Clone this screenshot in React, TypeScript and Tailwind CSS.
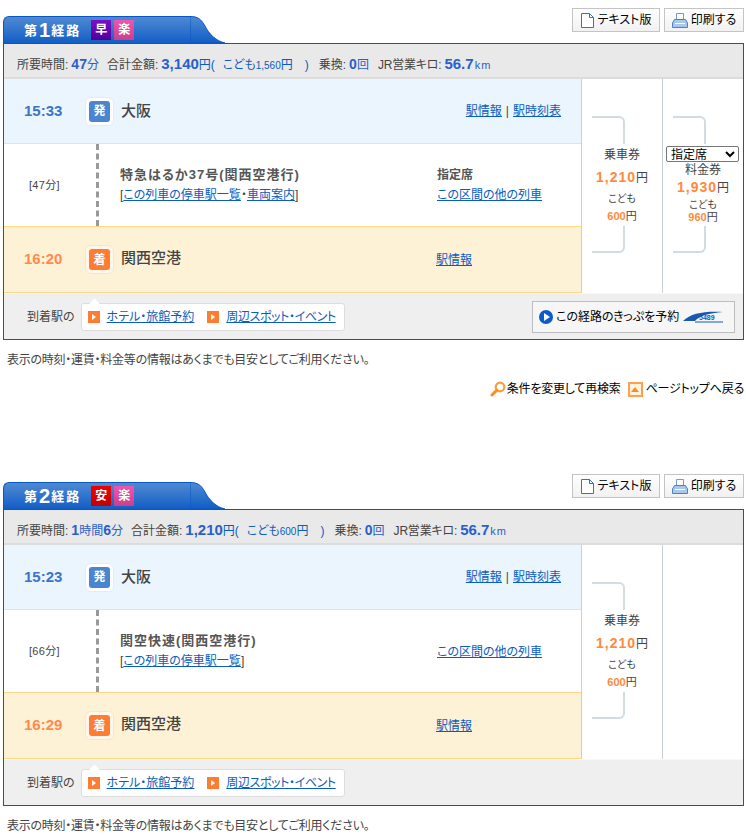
import type { ReactNode } from "react";

const linkClass = "text-[#0b5cc0] underline";

interface Leg {
    no: number;
    badge: string;
    badgeClass: string;
    time: ReactNode;
    fare: string;
    child: string;
    depart: string;
    arrive: string;
    minutes: string;
    train: string;
    trainLinks: string[];
    seat?: boolean;
}

function Bracket({ bottom }: { bottom?: boolean }) {
    return (
        <div
            className={
                bottom
                    ? "h-[27px] w-[33px] ml-[10px] border-b-2 border-r-2 border-[#d2dbdf] rounded-br-[6px]"
                    : "h-[28px] w-[33px] ml-[10px] border-t-2 border-r-2 border-[#d2dbdf] rounded-tr-[6px]"
            }
        />
    );
}

function Price({ label, adult, child, select }: { label: string; adult: string; child: string; select?: boolean }) {
    return (
        <div className="w-[81px] shrink-0 border-l border-[#c6d0d6] flex flex-col justify-center bg-white pb-[3px]">
            <Bracket />
            {select ? (
                <select className="mt-[2px] ml-[3px] w-[73px] h-[16px] border border-[#767676] rounded-[2px] bg-white text-[12px] leading-[14px] text-black">
                    <option>指定席</option>
                </select>
            ) : null}
            <div className={`text-center text-[12px] leading-[14px] text-[#444] ${select ? "mt-[1px]" : "mt-[4px]"}`}>{label}</div>
            <div className={`text-center text-[12px] text-[#444] ${select ? "mt-[1px]" : "mt-[6px]"} leading-[18px]`}>
                <span className="text-[14px] font-bold text-[#ff8a3c] tracking-[1px]">{adult}</span>円
            </div>
            <div className={`text-center text-[10px] leading-[14px] text-[#444] ${select ? "mt-[1px]" : "mt-[5px]"}`}>こども</div>
            <div className={`text-center text-[11px] text-[#444] leading-[14px] ${select ? "-mt-[2px]" : "mt-[3px]"}`}>
                <span className="font-bold text-[#ff8a3c]">{child}</span>円
            </div>
            <div className={select ? "mt-[2px]" : "mt-[3px]"}>
                <Bracket bottom />
            </div>
        </div>
    );
}

function StationIcon({ label, className, ring }: { label: string; className: string; ring: string }) {
    return (
        <div className={`w-[29px] h-[29px] rounded-[6px] border flex items-center justify-center ${ring}`}>
            <div className={`w-[21px] h-[21px] rounded-[3px] text-white text-[12px] font-bold flex items-center justify-center ${className}`}>
                {label}
            </div>
        </div>
    );
}

function OrangeArrow() {
    return (
        <span className="w-[12px] h-[12px] bg-[#ff7d33] flex items-center justify-center">
            <span className="border-l-[4px] border-l-white border-y-[3px] border-y-transparent" />
        </span>
    );
}

function DocIcon() {
    return (
        <svg width="13" height="15" viewBox="0 0 13 15" fill="none">
            <path d="M.5 .5 H8.5 L12.5 4.5 V14.5 H.5 Z" fill="#fff" stroke="#2f74cf" />
            <path d="M8.5 .5 V4.5 H12.5" stroke="#2f74cf" />
        </svg>
    );
}

function PrinterIcon() {
    return (
        <svg width="16" height="15" viewBox="0 0 16 15">
            <path d="M4.5 .5 H11.5 V7 H4.5 Z" fill="#fff" stroke="#6f9bd4" />
            <path d="M2.5 6.5 H13.5 L15.5 10 V14.5 H.5 V10 Z" fill="#a9c7ea" stroke="#4a82c8" />
            <path d="M3 10.5 H13" stroke="#fff" />
        </svg>
    );
}

function SearchIcon() {
    return (
        <svg width="16" height="16" viewBox="0 0 16 16" fill="none">
            <circle cx="10" cy="6" r="4.3" stroke="#ff9a3a" strokeWidth="2.2" />
            <path d="M6.5 9.5 L2 14" stroke="#ff8a20" strokeWidth="3" strokeLinecap="round" />
        </svg>
    );
}

function RouteCard({ leg }: { leg: Leg }) {
    return (
        <div>
            {/* tab + buttons */}
            <div className="h-[35px] flex justify-between">
                <div className="flex self-end pl-[3px] h-[27px]">
                    <div className="w-[187px] h-[27px] rounded-tl-[6px] border-l border-t border-[#0b56c5] bg-gradient-to-b from-[#4e8ad2] to-[#0f5dc6] flex items-center pl-[20px]">
                        <span className="text-white font-bold text-[13px] tracking-[2px] leading-none flex items-center">
                            第<span className="text-[20px] leading-none tracking-[1px]">{leg.no}</span>経路
                        </span>
                        <span className={`ml-[10px] w-[20px] h-[20px] text-[12px] font-bold text-white flex items-center justify-center ${leg.badgeClass}`}>
                            {leg.badge}
                        </span>
                        <span className="ml-[3px] w-[20px] h-[20px] text-[12px] font-bold text-white flex items-center justify-center bg-gradient-to-b from-[#ee55b0] to-[#cc3f8d]">
                            楽
                        </span>
                    </div>
                    <svg width="35" height="27" viewBox="0 0 35 27">
                        <defs>
                            <linearGradient id={`tab${leg.no}`} x1="0" y1="0" x2="0" y2="1">
                                <stop offset="0" stopColor="#4e8ad2" />
                                <stop offset="1" stopColor="#0f5dc6" />
                            </linearGradient>
                        </defs>
                        <path d="M0 .5 C8 .5 11 3 15 10 C19 18 26 25 35 27 L0 27 Z" fill={`url(#tab${leg.no})`} stroke="#0b56c5" strokeWidth="1" />
                    </svg>
                </div>
                <div className="flex gap-[4px] h-[24px] pr-[2px] text-[12px] text-black">
                    <button className="w-[88px] border border-[#c4c4c4] bg-gradient-to-b from-white to-[#f1f1f1] flex items-center justify-center gap-[4px]">
                        <DocIcon />
                        テキスト版
                    </button>
                    <button className="w-[80px] border border-[#c4c4c4] bg-gradient-to-b from-white to-[#f1f1f1] flex items-center justify-center gap-[3px]">
                        <PrinterIcon />
                        印刷する
                    </button>
                </div>
            </div>

            <div className="ml-[3px] mr-[2px] border border-[#0b56c5] h-[297px] flex flex-col">
                {/* summary */}
                <div className="h-[35px] shrink-0 bg-[#e9e9e9] border-b-2 border-[#dcdcdc] flex items-center pt-[9px] pl-[13px] text-[12px] text-[#444] whitespace-nowrap">
                    <span>所要時間:</span>
                    <span className="ml-[3px] text-[#2a5fcb] -translate-y-[1px]">{leg.time}</span>
                    <span className="ml-[8px]">合計金額:</span>
                    <b className="ml-[3px] text-[15px] text-[#2a5fcb] -translate-y-[1px]">{leg.fare}</b>
                    <span className="text-[#0b5cc0]">円(</span>
                    <span className="ml-[8px] text-[#0b5cc0]">
                        こども<span className="text-[10px]">{leg.child}</span>円
                    </span>
                    <span className="ml-[12px] text-[#0b5cc0]">)</span>
                    <span className="ml-[10px]">乗換:</span>
                    <b className="ml-[3px] text-[14px] text-[#2a5fcb] -translate-y-[1px]">0</b>
                    <span className="text-[#2a5fcb]">回</span>
                    <span className="ml-[9px] tracking-[-0.2px]">JR営業キロ:</span>
                    <b className="ml-[3px] text-[15px] text-[#2a5fcb] -translate-y-[1px]">56.7</b>
                    <span className="ml-[1px] text-[11px] text-[#2a5fcb] tracking-[1px]">km</span>
                </div>

                {/* body */}
                <div className="h-[214px] shrink-0 flex">
                    <div className="w-[577px] shrink-0 flex flex-col">
                        <div className="h-[65px] bg-[#eaf5fe] border-b border-[#d3e6f5] flex items-center pl-[20px] pr-[20px]">
                            <div className="w-[61px] text-[15px] font-bold text-[#2a66c8] opacity-90">{leg.depart}</div>
                            <StationIcon label="発" className="bg-[#4a86d0]" ring="bg-white border-[#e3ebf8]" />
                            <div className="ml-[7px] text-[15px] font-medium text-[#444]">大阪</div>
                            <div className="ml-auto text-[12px] text-[#444]">
                                <a className={linkClass}>駅情報</a>
                                <span className="mx-[4px]">|</span>
                                <a className={linkClass}>駅時刻表</a>
                            </div>
                        </div>
                        <div className="h-[83px] flex border-b border-[#ffd987]">
                            <div className="w-[92px] flex items-center pl-[25px] text-[11px] tracking-[0.3px] text-[#444]">[{leg.minutes}]</div>
                            <div className="border-l-[3px] border-dashed border-[#999]" />
                            <div className="w-[338px] pl-[21px] flex flex-col justify-center">
                                <div className="text-[13px] font-bold tracking-[1px] text-[#555] leading-[18px] -translate-y-[1px]">{leg.train}</div>
                                <div className="mt-[2px] text-[12px] leading-[16px] text-[#444]">
                                    [
                                    {leg.trainLinks.map((t, i) => (
                                        <span key={t}>
                                            {i > 0 ? "・" : ""}
                                            <a className={linkClass}>{t}</a>
                                        </span>
                                    ))}
                                    ]
                                </div>
                            </div>
                            <div className="flex flex-col justify-center">
                                {leg.seat ? <div className="text-[12px] font-bold text-[#555] leading-[18px]">指定席</div> : null}
                                <a className={`${linkClass} text-[12px] leading-[18px] mt-[2px]`}>この区間の他の列車</a>
                            </div>
                        </div>
                        <div className="h-[66px] bg-[#fef2d6] flex items-center pl-[20px] border-b border-[#ffd987]">
                            <div className="w-[61px] text-[15px] font-bold text-[#ff8a4d]">{leg.arrive}</div>
                            <StationIcon label="着" className="bg-[#ff7d33]" ring="bg-[#fff8ea] border-[#fbe3cf]" />
                            <div className="ml-[7px] w-[315px] text-[15px] font-medium text-[#444] -translate-y-[1px]">関西空港</div>
                            <a className={`${linkClass} text-[12px]`}>駅情報</a>
                        </div>
                    </div>
                    <Price label="乗車券" adult="1,210" child="600" />
                    {leg.seat ? <Price label="料金券" adult="1,930" child="960" select /> : <div className="w-[81px] shrink-0 border-l border-[#c6d0d6]" />}
                </div>

                {/* footer */}
                <div className="flex-1 bg-[#efefef] border-t border-[#f8f8f8] flex items-center pl-[23px] pr-[8px] text-[12px] text-[#444]">
                    <span>到着駅の</span>
                    <div className="relative ml-[6px] h-[28px] w-[264px] bg-white border border-[#dddddd] rounded-[3px] flex items-center pl-[6px]">
                        <span className="absolute -top-[4px] left-[9px] w-[7px] h-[7px] bg-white rotate-45" />
                        <OrangeArrow />
                        <a className={`${linkClass} ml-[7px]`}>ホテル・旅館予約</a>
                        <span className="ml-[13px]">
                            <OrangeArrow />
                        </span>
                        <a className={`${linkClass} ml-[7px] tracking-[-0.4px]`}>周辺スポット・イベント</a>
                    </div>
                    {leg.seat ? (
                        <button className="ml-auto w-[203px] h-[32px] border border-[#bdbdbd] bg-[#f6f6f6] flex items-center pl-[6px] text-[12px] text-black">
                            <span className="w-[14px] h-[14px] rounded-full bg-[#0b5cc8] flex items-center justify-center">
                                <span className="ml-[1px] border-l-[6px] border-l-white border-y-[4px] border-y-transparent" />
                            </span>
                            <span className="ml-[3px]">この経路のきっぷを予約</span>
                            <svg width="42" height="14" viewBox="0 0 42 14" className="ml-[4px]">
                                <path d="M0 11 C8 3 22 1 40 2 C26 3 16 6 12 11 Z" fill="#1a57b0" />
                                <path d="M12 12 H40" stroke="#1a57b0" strokeWidth="1" />
                                <text x="16" y="10" fontSize="7" fontWeight="700" fill="#1a57b0">5489</text>
                            </svg>
                        </button>
                    ) : null}
                </div>
            </div>

            <div className="mt-[12px] ml-[7px] text-[12px] leading-[16px] tracking-[-0.25px] text-[#444]">
                表示の時刻・運賃・料金等の情報はあくまでも目安としてご利用ください。
            </div>
        </div>
    );
}

const legs: Leg[] = [
    {
        no: 1,
        badge: "早",
        badgeClass: "bg-gradient-to-b from-[#7a10c8] to-[#50009a]",
        time: (
            <>
                <b className="text-[14px]">47</b>分
            </>
        ),
        fare: "3,140",
        child: "1,560",
        depart: "15:33",
        arrive: "16:20",
        minutes: "47分",
        train: "特急はるか37号(関西空港行)",
        trainLinks: ["この列車の停車駅一覧", "車両案内"],
        seat: true,
    },
    {
        no: 2,
        badge: "安",
        badgeClass: "bg-gradient-to-b from-[#f00000] to-[#c00000]",
        time: (
            <>
                <b className="text-[14px]">1</b>時間<b className="text-[14px]">6</b>分
            </>
        ),
        fare: "1,210",
        child: "600",
        depart: "15:23",
        arrive: "16:29",
        minutes: "66分",
        train: "関空快速(関西空港行)",
        trainLinks: ["この列車の停車駅一覧"],
    },
];

export default function App() {
    return (
        <div className="w-[746px] h-[838px] overflow-hidden bg-white pt-[8px] font-['Liberation_Sans','Noto_Sans_CJK_JP',sans-serif] [font-feature-settings:'palt']">
            <RouteCard leg={legs[0]} />
            <div className="mt-[12px] h-[18px] pr-[2px] flex justify-end items-center gap-[1px] text-[12px] tracking-[-0.2px] text-black">
                <SearchIcon />
                <span>条件を変更して再検索</span>
                <span className="ml-[6px] mr-[2px] w-[15px] h-[15px] border-2 border-[#ffa050] bg-[#fff4e0] flex items-center justify-center">
                    <span className="border-b-[5px] border-b-[#ff8a20] border-x-[4px] border-x-transparent" />
                </span>
                <span>ページトップへ戻る</span>
            </div>
            <div className="mt-[76px]">
                <RouteCard leg={legs[1]} />
            </div>
        </div>
    );
}
